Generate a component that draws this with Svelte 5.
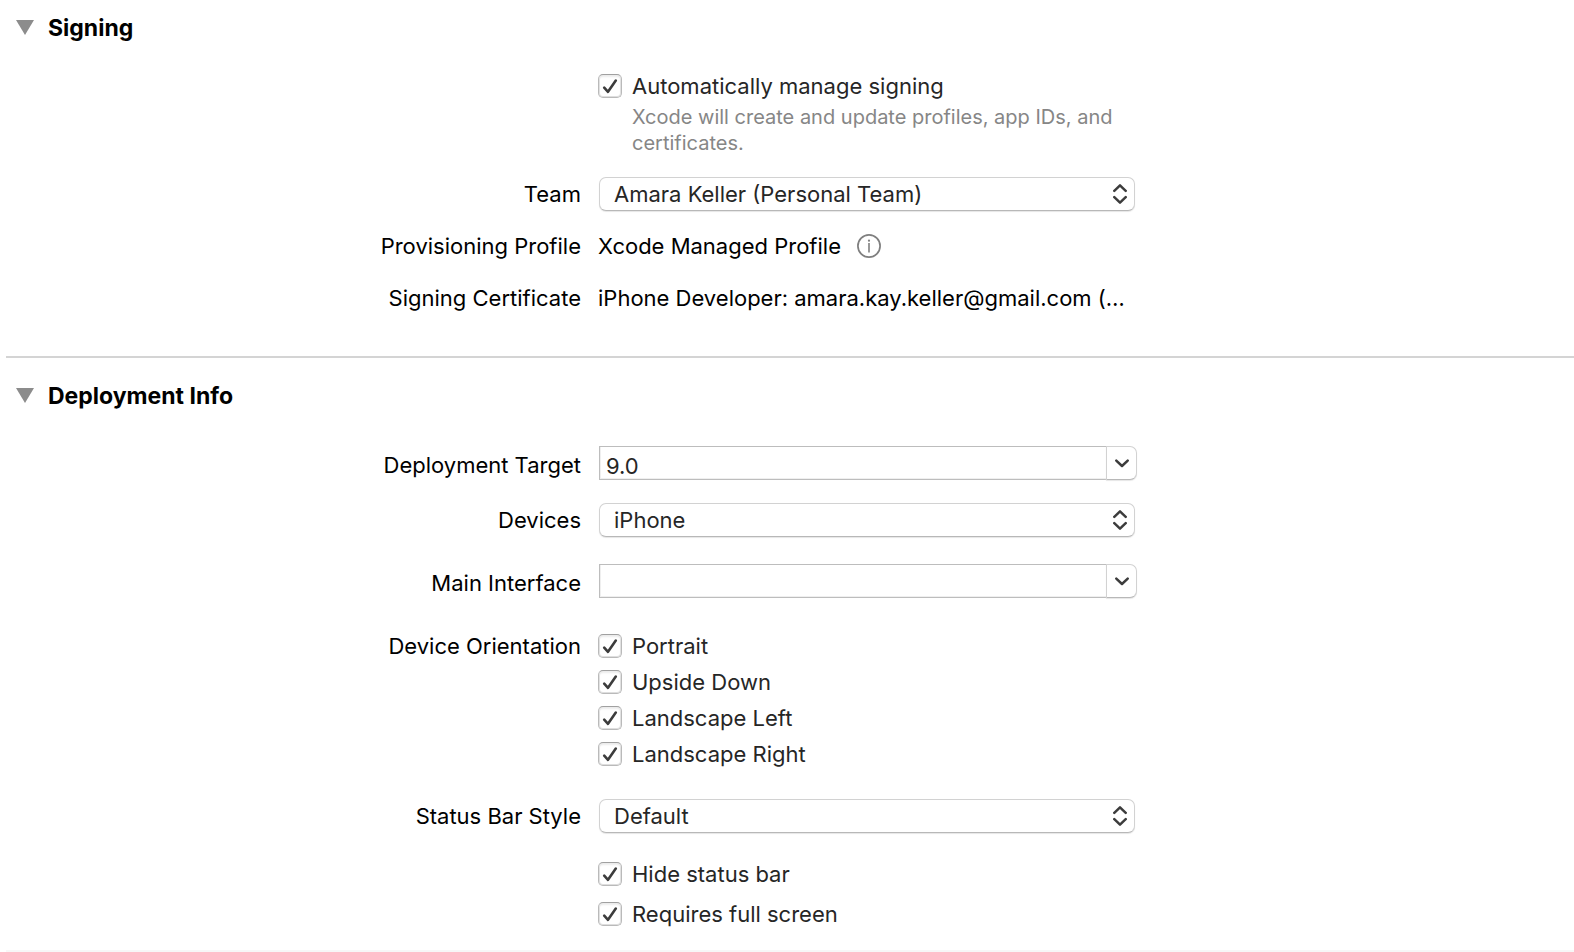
<script>
  let signingOpen = $state(true);
  let deploymentOpen = $state(true);
  let autoManage = $state(true);
  let target = $state('9.0');
  let mainInterface = $state('');
  let orientations = $state([
    { name: 'Portrait', on: true },
    { name: 'Upside Down', on: true },
    { name: 'Landscape Left', on: true },
    { name: 'Landscape Right', on: true }
  ]);
  let statusOptions = $state([
    { name: 'Hide status bar', on: true },
    { name: 'Requires full screen', on: true }
  ]);
</script>

{#snippet header(title, open, toggle)}
  <h2>
    <button class="disclosure" class:closed={!open} aria-expanded={open} onclick={toggle}>
      <svg width="18" height="17" viewBox="0 0 18 17" aria-hidden="true"><path d="M0 0H18L9 15Z" fill="#8c8c8c" /></svg>
      <span>{title}</span>
    </button>
  </h2>
{/snippet}

{#snippet tick()}
  <svg class="tick" width="24" height="24" viewBox="0 0 24 24" aria-hidden="true">
    <path d="M6.2 13.6L10 17.8L17.8 6.6" />
  </svg>
{/snippet}

{#snippet popup(id, value)}
  <div class="popup">
    <select {id}><option>{value}</option></select>
    <svg width="14" height="20" viewBox="0 0 14 20" aria-hidden="true">
      <path d="M1.3 6.8L7 1.4L12.7 6.8M1.3 13.2L7 18.6L12.7 13.2" />
    </svg>
  </div>
{/snippet}

{#snippet comboButton(label)}
  <button class="drop" aria-label={label}>
    <svg width="14" height="9" viewBox="0 0 14 9" aria-hidden="true"><path d="M1.3 1.6L7 7L12.7 1.6" /></svg>
  </button>
{/snippet}

<main>
  <section class="signing">
    {@render header('Signing', signingOpen, () => (signingOpen = !signingOpen))}
    {#if signingOpen}
      <div class="row auto">
        <div class="control">
          <label class="check"><span class="box"><input type="checkbox" bind:checked={autoManage} />{@render tick()}</span>Automatically manage signing</label>
          <p class="hint">Xcode will create and update profiles, app IDs, and certificates.</p>
        </div>
      </div>
      <div class="row team">
        <label class="name" for="team">Team</label>
        <div class="control">{@render popup('team', 'Amara Keller (Personal Team)')}</div>
      </div>
      <div class="row profile">
        <span class="name">Provisioning Profile</span>
        <div class="control value">
          <span>Xcode Managed Profile</span>
          <button class="info" aria-label="Profile details">
            <svg width="24" height="24" viewBox="0 0 24 24" aria-hidden="true">
              <circle cx="12" cy="12" r="11.1" fill="none" stroke="#7f7f7f" stroke-width="1.7" />
              <circle cx="12" cy="6.7" r="1.1" fill="#7f7f7f" />
              <path d="M12 9V18.5" stroke="#7f7f7f" stroke-width="1.6" />
            </svg>
          </button>
        </div>
      </div>
      <div class="row certificate">
        <span class="name">Signing Certificate</span>
        <div class="control value"><span>iPhone Developer: amara.kay.keller@gmail.com (…</span></div>
      </div>
    {/if}
  </section>

  <section class="deployment">
    {@render header('Deployment Info', deploymentOpen, () => (deploymentOpen = !deploymentOpen))}
    {#if deploymentOpen}
      <div class="row target">
        <label class="name field" for="target">Deployment Target</label>
        <div class="control combo">
          <input id="target" type="text" bind:value={target} />
          {@render comboButton('Choose deployment target')}
        </div>
      </div>
      <div class="row devices">
        <label class="name" for="devices">Devices</label>
        <div class="control">{@render popup('devices', 'iPhone')}</div>
      </div>
      <div class="row interface">
        <label class="name field" for="interface">Main Interface</label>
        <div class="control combo">
          <input id="interface" type="text" bind:value={mainInterface} />
          {@render comboButton('Choose main interface')}
        </div>
      </div>
      <div class="row orientation" role="group" aria-labelledby="orientation">
        <span class="name" id="orientation">Device Orientation</span>
        <div class="control checks">
          {#each orientations as item}
            <label class="check"><span class="box"><input type="checkbox" bind:checked={item.on} />{@render tick()}</span>{item.name}</label>
          {/each}
        </div>
      </div>
      <div class="row style">
        <label class="name" for="style">Status Bar Style</label>
        <div class="control">{@render popup('style', 'Default')}</div>
      </div>
      <div class="row status">
        <div class="control checks loose">
          {#each statusOptions as item}
            <label class="check"><span class="box"><input type="checkbox" bind:checked={item.on} />{@render tick()}</span>{item.name}</label>
          {/each}
        </div>
      </div>
    {/if}
  </section>
</main>

<style>
  :global(body) {
    margin: 0;
    background: #fff;
  }
  main {
    font: 22px/26px Inter, 'Liberation Sans', sans-serif;
    color: #000;
  }
  button,
  input,
  select {
    box-sizing: border-box;
    margin: 0;
    padding: 0;
    border: 0;
    font: inherit;
    color: #262626;
    background: #fff;
  }
  section {
    margin-left: 6px;
  }
  .signing {
    padding: 15px 0 45px;
    border-bottom: 2px solid #d4d4d4;
  }
  .deployment {
    padding: 25px 0 23px;
    border-bottom: 2px solid #f7f7f7;
  }
  h2 {
    margin: 0;
    font-size: 23px;
    font-weight: 700;
  }
  .disclosure {
    display: flex;
    align-items: center;
    gap: 14px;
    margin-left: 10px;
    color: #000;
  }
  .closed svg {
    transform: rotate(-90deg);
  }
  .row {
    display: grid;
    grid-template-columns: calc(50% - 209px) minmax(0, 539px);
    column-gap: 17px;
  }
  .name {
    text-align: right;
    align-self: center;
  }
  .field {
    padding-top: 4px;
  }
  .control {
    grid-column: 2;
    min-width: 0;
  }
  .auto {
    margin-top: 32px;
  }
  .team {
    margin-top: 21px;
  }
  .profile {
    margin-top: 22px;
  }
  .certificate {
    margin-top: 26px;
  }
  .target {
    margin-top: 37px;
  }
  .devices {
    margin-top: 23px;
  }
  .interface {
    margin-top: 27px;
  }
  .orientation {
    margin-top: 35px;
  }
  .orientation .name {
    align-self: start;
  }
  .style {
    margin-top: 32px;
  }
  .status {
    margin-top: 28px;
  }
  .check {
    display: flex;
    align-items: center;
    gap: 10px;
    color: #262626;
  }
  .checks {
    display: grid;
    gap: 10px;
  }
  .loose {
    gap: 14px;
  }
  .box {
    position: relative;
    flex: none;
    width: 24px;
    height: 24px;
  }
  .box input {
    appearance: none;
    display: block;
    width: 24px;
    height: 24px;
    border: 1px solid #bababa;
    border-top-color: #a0a0a0;
    border-radius: 5px;
    box-shadow: inset 0 2px 2px #ececec, inset 0 0 0 1px #dedede;
  }
  .tick {
    position: absolute;
    inset: 0;
    visibility: hidden;
    pointer-events: none;
  }
  .tick path {
    fill: none;
    stroke: #3c3c3c;
    stroke-width: 2.6;
    stroke-linecap: round;
    stroke-linejoin: round;
  }
  input:checked + .tick {
    visibility: visible;
  }
  .hint {
    margin: 5px 0 0 34px;
    font-size: 20px;
    color: #868686;
  }
  .popup {
    position: relative;
    margin: 0 2px 0 1px;
  }
  .popup select {
    appearance: none;
    display: block;
    width: 100%;
    height: 34px;
    padding: 0 40px 0 14px;
    border: 1px solid #d2d2d2;
    border-bottom-color: #b8b8b8;
    border-radius: 7px;
    box-shadow: 0 1px 1px #e6e6e6;
  }
  .popup svg {
    position: absolute;
    right: 8px;
    top: 7px;
    pointer-events: none;
  }
  .popup path,
  .drop path {
    fill: none;
    stroke: #3c3c3c;
    stroke-width: 2.5;
    stroke-linecap: round;
    stroke-linejoin: round;
  }
  .value {
    display: flex;
    align-items: center;
    gap: 16px;
    white-space: nowrap;
  }
  .info {
    display: block;
    flex: none;
    height: 24px;
  }
  .info svg {
    display: block;
  }
  .combo {
    display: flex;
    padding-left: 1px;
  }
  .combo input {
    flex: 1;
    min-width: 0;
    height: 34px;
    padding: 5px 6px 0;
    border: 1px solid #bdbdbd;
    border-right: 0;
    box-shadow: inset 0 -1px 0 #efefef, inset 1px 0 0 #efefef;
  }
  .drop {
    display: grid;
    place-items: center;
    width: 31px;
    height: 34px;
    border: 1px solid #d2d2d2;
    border-bottom-color: #b8b8b8;
    border-radius: 0 7px 7px 0;
    box-shadow: 0 1px 1px #e6e6e6;
  }
</style>
